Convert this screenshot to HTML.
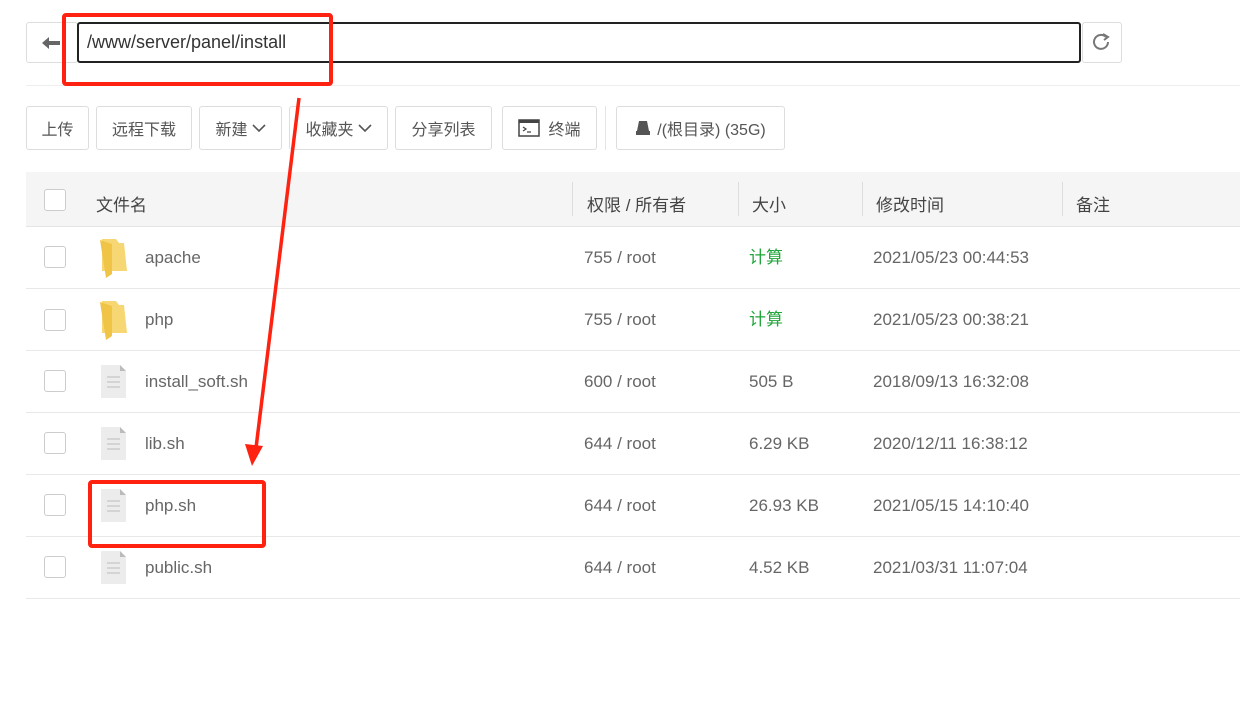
<!DOCTYPE html>
<html><head><meta charset="utf-8"><style>
*{margin:0;padding:0;box-sizing:border-box}
body{width:1240px;height:711px;background:#fff;position:relative;overflow:hidden;font-family:"Liberation Sans","Noto Sans CJK SC",sans-serif;color:#555;font-size:17px}
.a{position:absolute}
.btn{position:absolute;top:106px;height:44px;border:1px solid #ddd;border-radius:3px;background:#fff;display:flex;align-items:center;justify-content:center;font-size:16px;color:#555}
.cb{position:absolute;left:44px;width:22px;height:22px;border:1px solid #ccc;border-radius:3px;background:#fff}
.row{position:absolute;left:26px;width:1214px;height:62px;border-bottom:1px solid #e8e8e8}
.t{position:absolute;font-size:17px;color:#666;line-height:20px}
.hd{position:absolute;font-size:17px;color:#444;top:191px}
.vd{position:absolute;top:182px;width:1px;height:34px;background:#ddd}
</style></head><body>
<div class="a" style="left:26px;top:22px;width:52px;height:41px;border:1px solid #ddd;border-radius:3px"></div>
<svg class="a" style="left:41px;top:35px" width="20" height="16"><path d="M1 8 L8 2 V6 H19 V10 H8 V14 Z" fill="#666"/></svg>
<div class="a" style="left:77px;top:22px;width:1004px;height:41px;border:2px solid #222;border-radius:3px;padding-left:8px;line-height:37px;font-size:18px;color:#333">/www/server/panel/install</div>
<div class="a" style="left:1082px;top:22px;width:40px;height:41px;border:1px solid #ddd;border-radius:3px"></div>
<svg class="a" style="left:1091px;top:32px" width="20" height="20"><path d="M15 5 A7 7 0 1 0 17 10" fill="none" stroke="#777" stroke-width="2"/><path d="M12 2 L17 5 L13 8" fill="none" stroke="#777" stroke-width="2"/></svg>
<div class="a" style="left:26px;top:85px;width:1214px;height:1px;background:#eee"></div>
<div class="btn" style="left:26px;width:63px">上传</div>
<div class="btn" style="left:96px;width:96px">远程下载</div>
<div class="btn" style="left:199px;width:83px">新建<svg width="14" height="10" style="margin-left:4px"><path d="M1 2 L7 8 L13 2" fill="none" stroke="#555" stroke-width="1.6"/></svg></div>
<div class="btn" style="left:289px;width:99px">收藏夹<svg width="14" height="10" style="margin-left:4px"><path d="M1 2 L7 8 L13 2" fill="none" stroke="#555" stroke-width="1.6"/></svg></div>
<div class="btn" style="left:395px;width:97px">分享列表</div>
<div class="btn" style="left:502px;width:95px"><svg width="22" height="18" style="margin-right:8px"><rect x="1" y="1" width="20" height="16" fill="none" stroke="#444" stroke-width="1.5"/><rect x="1" y="1" width="20" height="3" fill="#444"/><path d="M5 8 L8 10 L5 12 M9 13 H13" fill="none" stroke="#444" stroke-width="1.2"/></svg>终端</div>
<div class="a" style="left:605px;top:106px;width:1px;height:44px;background:#e5e5e5"></div>
<div class="btn" style="left:616px;width:169px"><svg width="16" height="16" style="margin-right:6px"><path d="M4 1 H12 L14 11 H2 Z" fill="#555"/><rect x="1" y="11" width="14" height="4" fill="#555"/></svg>/(根目录) (35G)</div>
<div class="a" style="left:26px;top:172px;width:1214px;height:55px;background:#f5f5f5;border-bottom:1px solid #e5e5e5"></div>
<div class="cb" style="top:189px"></div>
<div class="hd" style="left:96px">文件名</div>
<div class="vd" style="left:572px"></div><div class="hd" style="left:587px">权限 / 所有者</div>
<div class="vd" style="left:738px"></div><div class="hd" style="left:752px">大小</div>
<div class="vd" style="left:862px"></div><div class="hd" style="left:876px">修改时间</div>
<div class="vd" style="left:1062px"></div><div class="hd" style="left:1076px">备注</div>

<div class="row" style="top:227px"></div><div class="row" style="top:289px"></div><div class="row" style="top:351px"></div><div class="row" style="top:413px"></div><div class="row" style="top:475px"></div><div class="row" style="top:537px"></div>

<div class="cb" style="top:246px"></div><div class="cb" style="top:309px"></div><div class="cb" style="top:370px"></div><div class="cb" style="top:432px"></div><div class="cb" style="top:494px"></div><div class="cb" style="top:556px"></div>

<svg class="a" style="left:100px;top:238px" width="28" height="40"><path d="M2 1 H16 L19 5 H24 L27 33 H2 Z" fill="#f7d774"/><path d="M0 2 L12 6 V36 L6 40 Z" fill="#f0c447"/></svg>
<svg class="a" style="left:100px;top:300px" width="28" height="40"><path d="M2 1 H16 L19 5 H24 L27 33 H2 Z" fill="#f7d774"/><path d="M0 2 L12 6 V36 L6 40 Z" fill="#f0c447"/></svg>
<svg class="a" style="left:101px;top:365px" width="26" height="33"><path d="M0 0 H19 L25 6 V33 H0 Z" fill="#ececec"/><path d="M19 0 L25 6 H19Z" fill="#bbb"/><path d="M6 12 H19 M6 17 H19 M6 22 H19" stroke="#ccc" stroke-width="1.5"/></svg>
<svg class="a" style="left:101px;top:427px" width="26" height="33"><path d="M0 0 H19 L25 6 V33 H0 Z" fill="#ececec"/><path d="M19 0 L25 6 H19Z" fill="#bbb"/><path d="M6 12 H19 M6 17 H19 M6 22 H19" stroke="#ccc" stroke-width="1.5"/></svg>
<svg class="a" style="left:101px;top:489px" width="26" height="33"><path d="M0 0 H19 L25 6 V33 H0 Z" fill="#ececec"/><path d="M19 0 L25 6 H19Z" fill="#bbb"/><path d="M6 12 H19 M6 17 H19 M6 22 H19" stroke="#ccc" stroke-width="1.5"/></svg>
<svg class="a" style="left:101px;top:551px" width="26" height="33"><path d="M0 0 H19 L25 6 V33 H0 Z" fill="#ececec"/><path d="M19 0 L25 6 H19Z" fill="#bbb"/><path d="M6 12 H19 M6 17 H19 M6 22 H19" stroke="#ccc" stroke-width="1.5"/></svg>

<div class="t" style="left:145px;top:248px">apache</div><div class="t" style="left:584px;top:248px">755 / root</div><div class="t" style="left:749px;top:248px;color:#20a53a">计算</div><div class="t" style="left:873px;top:248px">2021/05/23 00:44:53</div>
<div class="t" style="left:145px;top:310px">php</div><div class="t" style="left:584px;top:310px">755 / root</div><div class="t" style="left:749px;top:310px;color:#20a53a">计算</div><div class="t" style="left:873px;top:310px">2021/05/23 00:38:21</div>
<div class="t" style="left:145px;top:372px">install_soft.sh</div><div class="t" style="left:584px;top:372px">600 / root</div><div class="t" style="left:749px;top:372px">505 B</div><div class="t" style="left:873px;top:372px">2018/09/13 16:32:08</div>
<div class="t" style="left:145px;top:434px">lib.sh</div><div class="t" style="left:584px;top:434px">644 / root</div><div class="t" style="left:749px;top:434px">6.29 KB</div><div class="t" style="left:873px;top:434px">2020/12/11 16:38:12</div>
<div class="t" style="left:145px;top:496px">php.sh</div><div class="t" style="left:584px;top:496px">644 / root</div><div class="t" style="left:749px;top:496px">26.93 KB</div><div class="t" style="left:873px;top:496px">2021/05/15 14:10:40</div>
<div class="t" style="left:145px;top:558px">public.sh</div><div class="t" style="left:584px;top:558px">644 / root</div><div class="t" style="left:749px;top:558px">4.52 KB</div><div class="t" style="left:873px;top:558px">2021/03/31 11:07:04</div>

<div class="a" style="left:62px;top:13px;width:271px;height:73px;border:4px solid #f21;border-radius:4px"></div>
<div class="a" style="left:88px;top:480px;width:178px;height:68px;border:4px solid #f21;border-radius:4px"></div>
<svg class="a" style="left:0;top:0" width="1240" height="711"><path d="M299 98 L256 448" stroke="#f21" stroke-width="3.5" fill="none"/><path d="M245 444 L252 466 L263 446 Z" fill="#f21"/></svg>
</body></html>
